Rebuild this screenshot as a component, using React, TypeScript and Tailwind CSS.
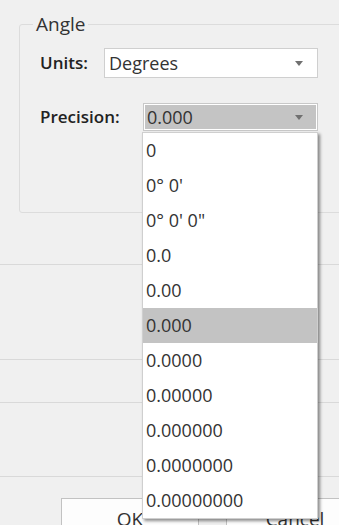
import React from 'react';

const precisions = [
  '0',
  "0° 0'",
  '0° 0\' 0"',
  '0.0',
  '0.00',
  '0.000',
  '0.0000',
  '0.00000',
  '0.000000',
  '0.0000000',
  '0.00000000',
];

const Arrow: React.FC = () => (
  <svg width="8" height="5" viewBox="0 0 8 5" className="shrink-0">
    <path d="M0 0 H8 L4 5 Z" fill="#707070" />
  </svg>
);

const App: React.FC = () => {
  const selected = '0.000';

  return (
    <div className="relative h-[525px] w-[339px] overflow-hidden bg-[#f0f0f0] text-[#333] font-['Open_Sans','Noto_Sans',sans-serif] text-[18px]">
      <fieldset className="mt-[12px] ml-[19px] mr-[-20px] h-[201px] rounded-[3px] border border-[#dcdcdc] px-[13px]">
        <legend className="px-[3px] leading-[24px] text-[19px] text-[#333]">Angle</legend>

        <div className="mt-[12px] flex items-center pl-[7px]">
          <span className="w-[64px] font-semibold text-[17px] text-[#222]">Units:</span>
          <div className="flex h-[30px] w-[214px] items-center justify-between border border-[#cfcfcf] bg-white pl-[4px] pr-[14px]">
            <span className="leading-none">Degrees</span>
            <Arrow />
          </div>
        </div>

        <div className="mt-[25px] flex items-center pl-[7px]">
          <span className="w-[103px] font-semibold text-[17px] text-[#222]">Precision:</span>
          <div className="flex h-[28px] w-[175px] items-center justify-between border border-[#c8c8c8] bg-[#c4c4c4] pl-[3px] pr-[14px] shadow-[inset_0_0_0_1px_#fff]">
            <span className="leading-none">0.000</span>
            <Arrow />
          </div>
        </div>
      </fieldset>

      <div className="h-[52px] border-b border-[#d9d9d9]" />
      <div className="h-[95px] border-b border-[#d9d9d9]" />
      <div className="h-[43px] border-b border-[#d9d9d9]" />
      <div className="h-[74px] border-b border-[#d9d9d9]" />

      <div className="mt-[21px] flex gap-[27px] pl-[61px]">
        <button className="h-[40px] w-[138px] shrink-0 border border-[#c2c2c2] bg-[#fdfdfd] pt-[2px] text-[19px] text-[#333]">OK</button>
        <button className="h-[40px] w-[138px] shrink-0 border border-[#c2c2c2] bg-[#fdfdfd] pt-[2px] text-[19px] text-[#333]">Cancel</button>
      </div>

      {/* open precision list */}
      <ul className="absolute left-[142px] top-[132px] w-[176px] border border-[#cfcfcf] bg-white shadow-[2px_2px_3px_rgba(0,0,0,0.45)]">
        {precisions.map((p) => (
          <li
            key={p}
            className={`flex h-[35px] items-center pl-[3px] ${p === selected ? 'bg-[#c3c3c3]' : ''}`}
          >
            {p}
          </li>
        ))}
      </ul>
    </div>
  );
};

export default App;
